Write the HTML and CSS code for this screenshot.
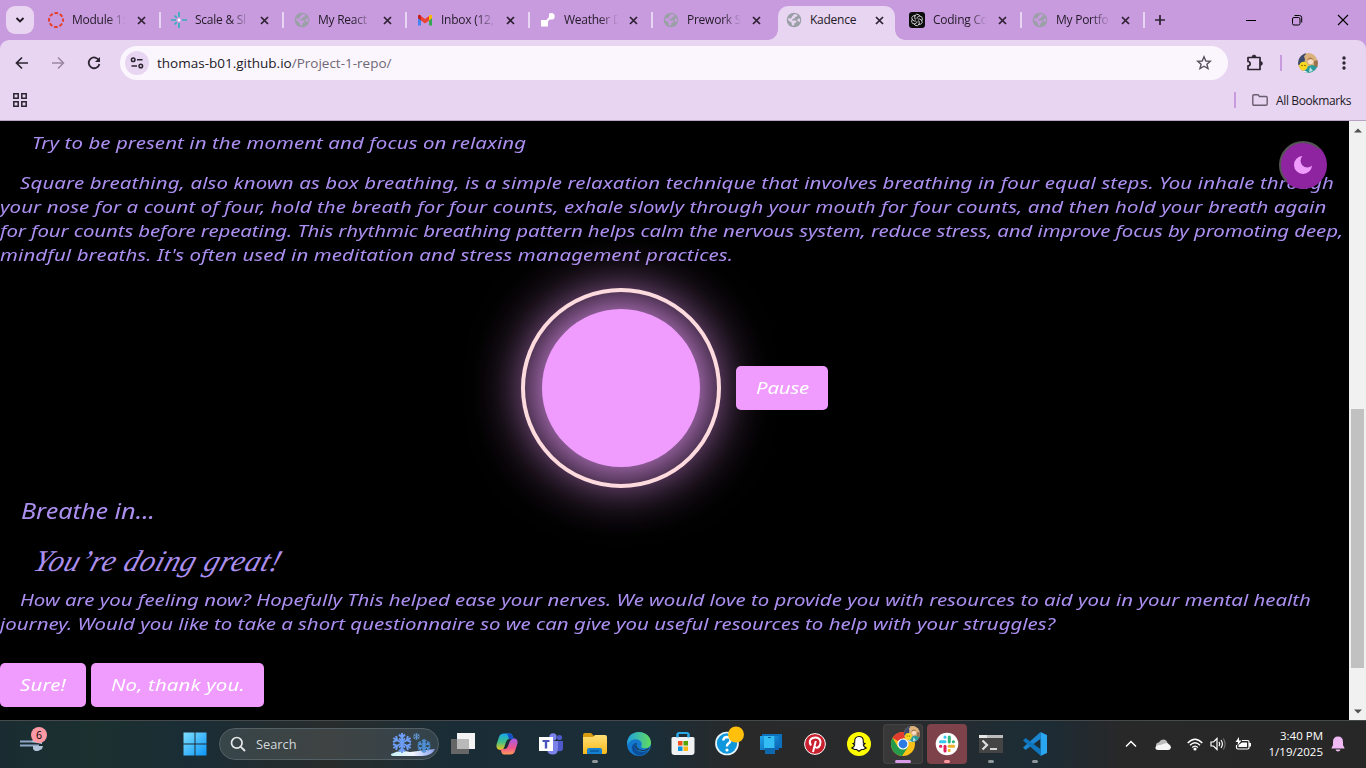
FILE: index.html
```html
<!DOCTYPE html>
<html lang="en">
<head>
<meta charset="utf-8">
<title>Kadence</title>
<link rel="stylesheet" href="styles.css">
</head>
<body>
<svg width="0" height="0" class="defs">
  <defs>
    <symbol id="globe" viewBox="0 0 16 16"><circle cx="8" cy="8" r="7.300" fill="#9aa0a6"/><path d="M8.500 2L11.500 2.800 11 4.500 9 5 8.500 6.500 6.500 7 6 8.500 10 8.500 10.500 10.500 8.500 11 8 13.500 6 13.200 5.500 10.500 2 8 2.200 6.300 5 6.500 6.500 4z" fill="currentColor"/><path d="M14 6.500L11.500 7 11.500 9 14 10z" fill="currentColor"/></symbol>
    <symbol id="x" viewBox="0 0 9 9"><path d="M1 1l7 7M8 1l-7 7" stroke="#2c2031" stroke-width="1.700" fill="none"/></symbol>
    <linearGradient id="win" x1="0" y1="0" x2="1" y2="1"><stop offset="0" stop-color="#7fe0ff"/><stop offset="1" stop-color="#0b95f7"/></linearGradient>
    <linearGradient id="cpA" x1="0" y1="0" x2="0" y2="1"><stop offset="0" stop-color="#16a6f0"/><stop offset=".5" stop-color="#3fbf8a"/><stop offset="1" stop-color="#f2c518"/></linearGradient>
    <linearGradient id="cpB" x1="0" y1="0" x2="0" y2="1"><stop offset="0" stop-color="#a65be8"/><stop offset=".6" stop-color="#f0568c"/><stop offset="1" stop-color="#ff9a5a"/></linearGradient>
    <linearGradient id="fold" x1="0" y1="0" x2="0" y2="1"><stop offset="0" stop-color="#ffdf76"/><stop offset="1" stop-color="#f8b91b"/></linearGradient>
    <linearGradient id="edA" x1="0" y1="0" x2="1" y2="0"><stop offset="0" stop-color="#1fa2e0"/><stop offset="1" stop-color="#62dc5c"/></linearGradient>
    <linearGradient id="ph" x1="0" y1="0" x2="1" y2="1"><stop offset="0" stop-color="#1fa5ea"/><stop offset="1" stop-color="#0a5fb0"/></linearGradient>
    <linearGradient id="snow" x1="0" y1="0" x2="1" y2="0"><stop offset="0" stop-color="#c4f1f6"/><stop offset=".5" stop-color="#f3f6ff"/><stop offset="1" stop-color="#8aa0ee"/></linearGradient>
    <symbol id="avatar" viewBox="0 0 20 20"><clipPath id="av"><circle cx="10" cy="10" r="10"/></clipPath><g clip-path="url(#av)"><rect width="20" height="20" fill="#d9b58a"/><path d="M0 0h8L6 12H0z" fill="#3c4a70"/><path d="M6 3Q12-3 17 3L19 14 14 16 8 10z" fill="#dcb27c"/><circle cx="12.500" cy="8.500" r="2.600" fill="#f7dcc6"/><path d="M9 7q3-5 7 0l-3-1z" fill="#a87845"/><path d="M8 14L14 12 20 13V20H6z" fill="#2a9a9c"/><path d="M16 8l4-1v7l-4-1z" fill="#9b744f"/><path d="M12 14l3 4-4 1z" fill="#bfe8e8"/><circle cx="5.500" cy="13" r="4.200" fill="#f8d91e"/><circle cx="4" cy="12.500" r=".7" fill="#5b4300"/><circle cx="7" cy="12.500" r=".7" fill="#5b4300"/><path d="M3 18h5l2 2H2z" fill="#eef"/></g></symbol>
    <symbol id="flake" viewBox="0 0 20 20"><g fill="none" stroke="currentColor" stroke-width="2"><path d="M10 0V20M1.300 5L18.700 15M18.700 5L1.300 15"/><path d="M7 1.500L10 4.500 13 1.500M7 18.500L10 15.500 13 18.500M1 9L5 7.200 4.200 3M19 11L15 12.800 15.800 17M19 9L15 7.200 15.800 3M1 11L5 12.800 4.200 17M7 5.500L10 8 13 5.500M7 14.500L10 12 13 14.500"/></g></symbol>
  </defs>
</svg>
<div class="browser">
  <div class="tabstrip">
    <div class="tabmenu"><svg width="10" height="8" viewBox="0 0 10 8"><path d="M1.500 2l3.500 3.500L8.500 2" fill="none" stroke="#221a26" stroke-width="1.900"/></svg></div>
    <div class="tab sep"><svg class="fav" viewBox="0 0 16 16"><circle cx="8" cy="8" r="7" fill="none" stroke="#e5402f" stroke-width="2" stroke-dasharray="3.700 1.800" stroke-dashoffset="1.800"/></svg><span class="title">Module 1:</span><svg class="close"><use href="#x"/></svg></div>
    <div class="tab sep"><svg class="fav" viewBox="0 0 16 16"><g stroke="#32b0bd" stroke-width="1.700"><path d="M8 0V5M8 11V16M0 8H5M11 8H16M3.500 3.500L5.800 5.800M3.500 12.500L5.800 10.200"/></g><circle cx="8" cy="8" r="1.500" fill="#fff"/></svg><span class="title">Scale &amp; Sl</span><svg class="close"><use href="#x"/></svg></div>
    <div class="tab sep"><svg class="fav"><use href="#globe"/></svg><span class="title">My React</span><svg class="close"><use href="#x"/></svg></div>
    <div class="tab sep"><svg class="fav" viewBox="0 0 16 16"><path d="M1 4V13.500H4V7z" fill="#4285f4"/><path d="M15 4V13.500H12V7z" fill="#34a853"/><path d="M12 4.500V8.500L15 6.200V3.500Q14 1.800 12 3.500z" fill="#fbbc04"/><path d="M4 4L8 7 12 4V8.500L8 11.500 4 8.500z" fill="#ea4335"/><path d="M1 3.500Q2 1.800 4 3.500V8.500L1 6.200z" fill="#c5221f"/></svg><span class="title">Inbox (12,</span><svg class="close"><use href="#x"/></svg></div>
    <div class="tab sep"><svg class="fav" viewBox="0 0 16 16"><path d="M1 8H6.500L9 5V1.500Q11 .5 13 1.200L14.600 3V6L13 7.500H9.500L8 9.500V14.500H1z" fill="#fff"/></svg><span class="title">Weather D</span><svg class="close"><use href="#x"/></svg></div>
    <div class="tab"><svg class="fav"><use href="#globe"/></svg><span class="title">Prework S</span><svg class="close"><use href="#x"/></svg></div>
    <div class="tab active"><svg class="fav"><use href="#globe"/></svg><span class="title">Kadence</span><svg class="close"><use href="#x"/></svg></div>
    <div class="tab sep"><svg class="fav" viewBox="0 0 16 16"><rect width="16" height="16" rx="3" fill="#0d0d0d"/><g fill="none" stroke="#eee" stroke-width=".75"><path id="pet" d="M8 8V5.500L10.500 4Q13.500 4 13.500 7L12.500 9"/><use href="#pet" transform="rotate(60 8 8)"/><use href="#pet" transform="rotate(120 8 8)"/><use href="#pet" transform="rotate(180 8 8)"/><use href="#pet" transform="rotate(240 8 8)"/><use href="#pet" transform="rotate(300 8 8)"/></g><circle cx="8" cy="8" r="1.300" fill="#0d0d0d"/></svg><span class="title">Coding Co</span><svg class="close"><use href="#x"/></svg></div>
    <div class="tab sep"><svg class="fav"><use href="#globe"/></svg><span class="title">My Portfo</span><svg class="close"><use href="#x"/></svg></div>
    <svg class="plus" width="12" height="12" viewBox="0 0 12 12"><path d="M6 1V11M1 6H11" stroke="#2c2031" stroke-width="1.700"/></svg>
    <div class="winctl">
      <svg width="12" height="12" viewBox="0 0 12 12"><path d="M1 6.500H11" stroke="#000"/></svg>
      <svg width="12" height="12" viewBox="0 0 12 12"><rect x="1.500" y="3.500" width="7.500" height="7.500" rx="1.500" fill="none" stroke="#000"/><path d="M3.500 1.500H8.500Q10.700 1.500 10.700 3.700V8.500" fill="none" stroke="#000"/></svg>
      <svg width="12" height="12" viewBox="0 0 12 12"><path d="M1 1L11 11M11 1L1 11" stroke="#000" stroke-width="1.100"/></svg>
    </div>
  </div>
  <div class="chrome-body">
  <div class="toolbar">
    <div class="nav">
      <svg width="16" height="16" viewBox="0 0 16 16"><path d="M14 8H3M8 2.500L2.500 8 8 13.500" fill="none" stroke="#2c2431" stroke-width="1.700"/></svg>
      <svg width="16" height="16" viewBox="0 0 16 16"><path d="M2 8H13M8 2.500L13.500 8 8 13.500" fill="none" stroke="#9a86a5" stroke-width="1.500"/></svg>
      <svg width="16" height="16" viewBox="0 0 16 16"><path d="M13 5.500A5.400 5.400 0 1 0 13.400 9" fill="none" stroke="#2c2431" stroke-width="1.800"/><path d="M14 2V7H9z" fill="#2c2431"/></svg>
    </div>
    <div class="omnibox">
      <span class="site"><svg width="14" height="14" viewBox="0 0 14 14"><g fill="none" stroke="#2c2431" stroke-width="1.500"><circle cx="3.200" cy="3.700" r="1.800"/><path d="M7 3.700H12.500M1.500 10H7"/><circle cx="10.800" cy="10" r="1.800"/></g></svg></span>
      <span class="url">thomas-b01.github.io<span class="path">/Project-1-repo/</span></span>
      <svg class="star" width="16" height="16" viewBox="0 0 16 16"><path d="M8 1.800L9.800 6 14.300 6.300 10.900 9.200 12 13.600 8 11.200 4 13.600 5.100 9.200 1.700 6.300 6.200 6z" fill="none" stroke="#59515e" stroke-width="1.400"/></svg>
    </div>
    <svg class="ext" width="18" height="18" viewBox="0 0 18 18"><path d="M2 3.500H14V15.500H2V11.800A2 2 0 0 0 2 7.500V3.500z" fill="none" stroke="#2c2431" stroke-width="1.700" stroke-linejoin="round"/><path d="M6 3A2 2 0 0 1 10 3zM14.500 7.400A2 2 0 0 1 14.500 11.400z" fill="#2c2431" stroke="#2c2431" stroke-width=".6"/></svg>
    <i class="vline"></i>
    <svg class="ava" width="20" height="20"><use href="#avatar"/></svg>
    <svg width="4" height="14" viewBox="0 0 4 14"><g fill="#2c2431"><circle cx="2" cy="2" r="1.700"/><circle cx="2" cy="7" r="1.700"/><circle cx="2" cy="12" r="1.700"/></g></svg>
  </div>
  <div class="bookmarks">
    <svg width="14" height="14" viewBox="0 0 14 14"><g fill="none" stroke="#2c2431" stroke-width="1.500"><path d="M.8.800H5.200V5.200H.8zM8.800.800H13.200V5.200H8.800zM.8 8.800H5.200V13.200H.8zM8.800 8.800H13.200V13.200H8.800z"/></g></svg>
    <i class="vline end"></i>
    <svg class="folder" width="16" height="12" viewBox="0 0 16 12"><path d="M.8 10V2Q.8.800 2 .800H6L7.500 2.500H14Q15.200 2.500 15.200 3.700V10Q15.200 11.200 14 11.200H2Q.8 11.200.8 10z" fill="none" stroke="#6a5f70" stroke-width="1.400"/></svg>
    <span class="allb">All Bookmarks</span>
  </div>
  </div>
  <div class="viewport">
    <main class="page">
      <p class="line intro"><span class="wide t2">Try to be present in the moment and focus on relaxing</span></p>
      <div class="about">
        <p class="line first"><span class="wide t3">Square breathing, also known as box breathing, is a simple relaxation technique that involves breathing in four equal steps. You inhale through</span></p>
        <p class="line"><span class="wide t2">your nose for a count of four, hold the breath for four counts, exhale slowly through your mouth for four counts, and then hold your breath again</span></p>
        <p class="line"><span class="wide t0">for four counts before repeating. This rhythmic breathing pattern helps calm the nervous system, reduce stress, and improve focus by promoting deep,</span></p>
        <p class="line"><span class="wide t3">mindful breaths. It's often used in meditation and stress management practices.</span></p>
      </div>
      <div class="exercise">
        <div class="ring"><div class="orb"></div></div>
        <button class="btn pause"><span class="wide">Pause</span></button>
      </div>
      <p class="breathe"><span class="wide">Breathe in...</span></p>
      <h2 class="praise"><span>You’re doing great!</span></h2>
      <div class="feeling">
        <p class="line first"><span class="wide t1">How are you feeling now? Hopefully This helped ease your nerves. We would love to provide you with resources to aid you in your mental health</span></p>
        <p class="line"><span class="wide t1">journey. Would you like to take a short questionnaire so we can give you useful resources to help with your struggles?</span></p>
      </div>
      <div class="choices">
        <button class="btn sure"><span class="wide t3">Sure!</span></button>
        <button class="btn decline"><span class="wide t3">No, thank you.</span></button>
      </div>
      <button class="theme"><svg width="20" height="20" viewBox="0 0 20 20"><path d="M9.500 1A9 9 0 1 0 19 10.500A5.800 5.800 0 1 1 9.500 1z" fill="#f09cff"/></svg></button>
    </main>
    <div class="scroll">
      <svg width="8" height="5" viewBox="0 0 8 5"><path d="M0 4.500L4 .5 8 4.500z" fill="#505050"/></svg>
      <div class="thumb"></div>
      <svg class="down" width="8" height="5" viewBox="0 0 8 5"><path d="M0 .5L4 4.500 8 .5z" fill="#505050"/></svg>
    </div>
  </div>
</div>
<div class="taskbar">
  <div class="weather"><svg width="26" height="20" viewBox="0 0 26 20"><path d="M1 7.500H18M1 11.500H20" stroke="#8fa8c8" stroke-width="2"/><path d="M13 7L17 3 23 4V10L13 8zM14 12H24L23 15 19 17H16L14 15z" fill="#b2c4da"/></svg><b class="badge">6</b></div>
  <svg class="start" width="24" height="24" viewBox="0 0 24 24"><path d="M.5.500H11.500V11.500H.5zM12.500.500H23.500V11.500H12.500zM.5 12.500H11.500V23.500H.5zM12.500 12.500H23.500V23.500H12.500z" fill="url(#win)"/></svg>
  <div class="search">
    <svg width="16" height="16" viewBox="0 0 16 16"><circle cx="6.800" cy="6.800" r="5.300" fill="none" stroke="#e6e8e9" stroke-width="1.700"/><path d="M10.800 10.800L15 15" stroke="#e6e8e9" stroke-width="1.900"/></svg>
    <span>Search</span>
    <svg class="winter" width="46" height="26" viewBox="0 0 46 26"><path d="M1 23Q10 18 20 21L45 18Q42 25 32 25H5Q0 25 1 23z" fill="url(#snow)"/><use href="#flake" x="2" y="2" width="20" height="20" color="#6d9df5"/><use href="#flake" x="27" y="8" width="14" height="14" color="#4f91d8"/><use href="#flake" x="23" y="2" width="7" height="7" color="#6aa0e0"/></svg>
  </div>
  <div class="apps">
    <div class="app"><svg viewBox="0 0 24 24"><rect x="6" y="1" width="18" height="16" fill="#f3f3f3"/><rect x="0" y="7" width="18" height="15" fill="#666"/><rect x="6" y="7" width="12" height="10" fill="#b9b9b9"/></svg></div>
    <div class="app"><svg viewBox="0 0 24 24"><path d="M9 1.500H15Q17 1.500 18 5L19 7H14Q12 7 11 10L9 16Q8 18 5 18Q0 17 2 11L4 5Q5 1.500 9 1.500z" fill="url(#cpA)"/><path d="M12 1.500H15Q17 1.500 18 5L18.500 7H14Q13 4 12 1.500z" fill="#174fc4"/><path d="M15 22.500H9Q7 22.500 6 19L5.500 17H10Q12 17 13 14L15 9Q16 6.500 19 6.500Q24 7 22 13L20 19Q19 22.500 15 22.500z" fill="url(#cpB)"/></svg></div>
    <div class="app"><svg viewBox="0 0 24 24"><circle cx="14" cy="5" r="3.700" fill="#7b83eb"/><circle cx="20.500" cy="5.500" r="2.600" fill="#5059c9"/><path d="M8 9H19V17Q19 22.500 13.500 22.500Q9 22.500 8 18z" fill="#7b83eb"/><path d="M19 9H24V16Q24 20 19 19z" fill="#5059c9"/><rect x="0" y="5" width="14" height="14" fill="#fff"/><path d="M3.500 8H10.500V10H8.200V16.500H5.800V10H3.500z" fill="#4b53bc"/></svg></div>
    <div class="app run"><svg viewBox="0 0 24 24"><path d="M0 3Q0 1 2 1H8L11 4V6H0z" fill="#d99a0f"/><path d="M0 5H10L12 3H22Q24 3 24 5V20Q24 22 22 22H0z" fill="url(#fold)"/><path d="M4 22V18Q4 16 6 16H17Q19 16 19 18V22z" fill="#1580cf"/><path d="M7 19H16" stroke="#0b5a9e" stroke-width="1.500"/></svg></div>
    <div class="app"><svg viewBox="0 0 24 24"><circle cx="12" cy="12" r="12" fill="#1478cc"/><path d="M.3 10C1 3.500 6 0 12 0C19 0 24 5 24 11C24 15 20 17 16 16Q13.500 15.500 14.500 13.500C16 9 10 6 5 8Q1.500 9.500 .3 13z" fill="url(#edA)"/><path d="M9.500 11C7 14 9 20 15 20Q19 20 21.500 18C18 24 11 25 7 21C3 17 5 11 9.500 11z" fill="#0b4f9c"/><path d="M10 10.500Q8.500 13 10 15.500 13 19 18 17.800L22.500 15.500 22 17Q18 19.500 14 18.800C9 18 7 14 10 10.500z" fill="#20343b"/></svg></div>
    <div class="app"><svg viewBox="0 0 24 24"><path d="M6.500 7V2.500Q6.500 1 8 1H16Q17.500 1 17.500 2.500V7" fill="none" stroke="#2aa9e8" stroke-width="2"/><path d="M.5 6.500Q.5 5 2 5H22Q23.500 5 23.500 6.500V20Q23.500 23 20.500 23H3.500Q.5 23 .5 20z" fill="#f0f1f2"/><path d="M6.500 1.500V5.500M17.500 1.500V5.500" stroke="#2aa9e8" stroke-width="2"/><path d="M7 9H11.500V13.500H7z" fill="#f1511b"/><path d="M12.500 9H17V13.500H12.500z" fill="#57a300"/><path d="M7 14.500H11.500V19H7z" fill="#0a93e0"/><path d="M12.500 14.500H17V19H12.500z" fill="#fdb913"/></svg></div>
    <div class="app"><svg class="help" viewBox="0 0 30 30"><circle cx="12" cy="17.500" r="11" fill="#0e97dc" stroke="#e9f5fb" stroke-width="1.700"/><path d="M8.300 14.500Q8.500 11 12 11 15.700 11.200 15.500 14.500 15.300 16.500 13 17.800 12 18.500 12 20.500" fill="none" stroke="#fff" stroke-width="2.500"/><circle cx="12" cy="24" r="1.600" fill="#fff"/><circle cx="21" cy="8.500" r="8" fill="#ffbf0a"/></svg></div>
    <div class="app"><svg viewBox="0 0 24 24"><path d="M3 2H23V16H3z" fill="#0c72bd"/><path d="M1 4H20V18H1z" fill="url(#ph)"/><path d="M6 4H16V22H6z" fill="#0e68ad"/><path d="M5 4H15.500V16H5z" fill="#34bdf4"/><path d="M9 5.500H12" stroke="#0b5890"/></svg></div>
    <div class="app"><svg viewBox="0 0 24 24"><circle cx="12" cy="12" r="10.400" fill="#c8202f" stroke="#fff" stroke-width="1"/><path d="M8 13.500C5 9 8 5.500 12.500 5.500S18.500 9.500 17 13 12.500 16.500 11.500 14M12.800 9L10 20" fill="none" stroke="#fff" stroke-width="2"/></svg></div>
    <div class="app"><svg viewBox="0 0 24 24"><circle cx="12" cy="12" r="12" fill="#fffc00"/><path d="M12 4.500C15 4.500 16.300 6.500 16.300 9V11L18 11.500 16.300 13Q17 15 19.200 16L16.500 17.500 14.500 17.500 12 19.300 9.500 17.500 7.500 17.500 4.800 16Q7 15 7.700 13L6 11.500 7.700 11V9C7.700 6.500 9 4.500 12 4.500z" fill="#fff" stroke="#111" stroke-width="1.100"/></svg></div>
    <div class="app run current"><svg viewBox="0 0 24 24"><circle cx="12" cy="12" r="12" fill="#fbc116"/><path d="M12 12L1.600 6A12 12 0 0 1 22.400 6H12z" fill="#e33b2e"/><path d="M1.600 6A12 12 0 0 0 11 24L17 15 7 15z" fill="#239b4b"/><circle cx="12" cy="12" r="5.600" fill="#fff"/><circle cx="12" cy="12" r="4.400" fill="#2c7be5"/></svg><svg class="mini"><use href="#avatar"/></svg></div>
    <div class="app run alert"><svg viewBox="0 0 24 24"><circle cx="12" cy="12" r="11.300" fill="#fff"/><g stroke-width="3" stroke-linecap="round"><path d="M10 5V5.200M5.500 9.800H10" stroke="#36c5f0"/><path d="M14.300 5V10M18.500 9.800H18.300" stroke="#2eb67d"/><path d="M14 14.300H18.700M14.200 18.500V18.300" stroke="#ecb22e"/><path d="M10 14.300V19M5.500 14.300H5.800" stroke="#e01e5a"/></g></svg></div>
    <div class="app run"><svg viewBox="0 0 24 24"><rect y="3" width="24" height="18" fill="#444"/><rect y="3" width="24" height="3" fill="#bcbcbc"/><rect y="3" width="8" height="3" fill="#e6e6e6"/><path d="M3.500 8.500L8 13 3.500 17.500" fill="none" stroke="#ddd" stroke-width="2.300"/><path d="M11 17H18" stroke="#eee" stroke-width="1.700"/></svg></div>
    <div class="app run"><svg viewBox="0 0 24 24"><path d="M17.500 0L24 3V21L17.500 24z" fill="#2aa5ef"/><path d="M17.500 0L0 15.500 2.500 18 18 6.500z" fill="#1b86cf"/><path d="M0 8.500L2.500 6 18 17.500V24z" fill="#0f76bd"/></svg></div>
  </div>
  <div class="tray">
    <svg width="12" height="8" viewBox="0 0 12 8"><path d="M1 6.500L6 1.500 11 6.500" fill="none" stroke="#fff" stroke-width="1.500"/></svg>
    <svg class="cloud" width="16" height="11" viewBox="0 0 16 11"><path d="M1.500 8Q0 4 4 3.200 6-.5 10 .8 12 1.500 12.500 4L15 6z" fill="#bcbcbc"/><path d="M3 11Q0 11 .5 8 1.500 5.500 5 6L11.500 4Q13 4 13.500 5.500 16 6 16 8.500 15.500 11 13 11z" fill="#f5f5f5"/></svg>
    <svg class="wifi" width="16" height="13" viewBox="0 0 16 13"><g fill="none" stroke="#fff" stroke-width="1.300"><path d="M.7 5Q8-2.500 15.300 5M3 7.300Q8 2.300 13 7.300M5.200 9.500Q8 6.800 10.800 9.500"/></g><circle cx="8" cy="11" r="1.600" fill="#fff"/></svg>
    <svg class="vol" width="17" height="14" viewBox="0 0 17 14"><path d="M1 5H3.500L7 1.500V12.500L3.500 9H1z" fill="none" stroke="#fff" stroke-width="1.200"/><path d="M9 4.800Q10.500 7 9 9.200M11 3Q13.800 7 11 11" fill="none" stroke="#fff" stroke-width="1.200"/><path d="M13.300 1.500Q17 7 13.300 12.500" fill="none" stroke="#777" stroke-width="1.100"/></svg>
    <svg class="bat" width="17" height="14" viewBox="0 0 17 14"><path d="M7 3.500H12.500Q14 3.500 14 5V10.500Q14 12 12.500 12H3Q1.500 12 1.500 10.500V8" fill="none" stroke="#fff" stroke-width="1.200"/><path d="M7 5.500H12V10H3.500V8z" fill="#fff"/><path d="M15 6V9.500" stroke="#fff" stroke-width="2"/><path d="M4 0L.5 5H3L2.500 8.500 6.500 3.500H4z" fill="#fff"/></svg>
    <div class="clock">3:40 PM<br>1/19/2025</div>
    <svg class="bell" width="14" height="16" viewBox="0 0 14 16"><path d="M7 .5Q12 .5 12 6V9L13.700 12.500H.3L2 9V6Q2 .5 7 .5zM4.500 13.500H9.500Q9 15.500 7 15.500T4.500 13.500z" fill="#efb9f3"/></svg>
  </div>
</div>
</body>
</html>
```
FILE: styles.css
```css
* { box-sizing: border-box; }
body { margin: 0; width: 1366px; height: 768px; overflow: hidden; background: #000; font-family: "Open Sans", "Noto Sans", sans-serif; font-size: 12px; color: #221a26; display: flex; flex-direction: column; }
svg { display: block; flex: none; }
.defs { position: absolute; }
p, h2 { margin: 0; }
.browser { height: 720px; background: #c89bdf; display: flex; flex-direction: column; }
.tabstrip { height: 40px; display: flex; align-items: center; gap: 6px; padding-left: 6px; }
.tabmenu { width: 28px; height: 28px; border-radius: 9px; background: #e8d5f1; display: flex; align-items: center; justify-content: center; }
.tab { position: relative; width: 117px; height: 34px; margin-top: 6px; padding: 0 10px 6px 8px; display: flex; align-items: center; }
.tab.sep::after { content: ""; position: absolute; right: -4px; top: 6px; width: 2px; height: 16px; background: #e8d5f1; }
.tab.active { background: #e8d5f1; border-radius: 10px 10px 0 0; }
.tab.active::before, .tab.active::after { content: ""; position: absolute; bottom: 0; width: 10px; height: 10px; }
.tab.active::before { left: -10px; background: radial-gradient(circle at 0 0, transparent 9.5px, #e8d5f1 10px); }
.tab.active::after { right: -10px; background: radial-gradient(circle at 100% 0, transparent 9.5px, #e8d5f1 10px); }
.fav { width: 16px; height: 16px; color: #c89bdf; }
.active .fav { color: #e8d5f1; }
.title { width: 54px; margin-left: 8px; white-space: nowrap; line-height: 16px; letter-spacing: -.25px; -webkit-mask-image: linear-gradient(90deg, #000 66%, transparent); mask-image: linear-gradient(90deg, #000 66%, transparent); }
.active .title { -webkit-mask-image: none; mask-image: none; }
.close { width: 9px; height: 9px; margin-left: auto; margin-right: 1px; }
.plus { margin-left: 7px; }
.winctl { margin-left: auto; display: flex; gap: 34px; padding-right: 17px; }
.chrome-body { height: 81px; background: #e8d5f1; border-radius: 9px 9px 0 0; border-bottom: 1px solid #b8a4c2; }
.toolbar { height: 46px; display: flex; align-items: center; padding-left: 14px; }
.nav { display: flex; gap: 20px; width: 106px; }
.omnibox { width: 1108px; height: 34px; border-radius: 17px; background: #fbf6fd; display: flex; align-items: center; padding: 0 16px 0 5px; }
.site { width: 24px; height: 24px; border-radius: 50%; background: #e8d5f1; display: flex; align-items: center; justify-content: center; margin-right: 8px; }
.url { font-size: 13.5px; white-space: nowrap; }
.path { color: #706776; }
.star { margin-left: auto; }
.ext { margin-left: 18px; }
.vline { width: 2px; height: 16px; background: #c89bdf; margin: 0 16px; }
.ava { margin-right: 24px; }
.bookmarks { height: 28px; display: flex; align-items: center; padding: 0 15px 0 13px; }
.vline.end { margin-left: auto; }
.folder { margin-right: 8px; }
.allb { width: 75px; white-space: nowrap; letter-spacing: -.37px; }
.viewport { height: 599px; display: flex; background: #000; }
.page { position: relative; width: 1349px; height: 599px; padding-top: 10px; overflow: hidden; color: #ab8ff0; font-family: "Noto Sans", "Open Sans", sans-serif; font-style: italic; font-size: 17px; line-height: 24px; }
/* Extended letterforms */
.wide { display: inline-block; transform: scaleX(1.2); transform-origin: 0 50%; white-space: nowrap; }
.t0 { letter-spacing: -.08px; }
.t1 { letter-spacing: 0; }
.t2 { letter-spacing: .08px; }
.t3 { letter-spacing: .112px; }
.line { height: 24px; white-space: nowrap; }
.intro { padding-left: 32px; }
.about { margin-top: 16px; }
.first { padding-left: 20px; }
.exercise { display: flex; align-items: center; justify-content: center; gap: 15px; margin-top: 21px; isolation: isolate; }
.ring { width: 200px; height: 200px; border: 4px solid #fcdadd; border-radius: 50%; display: flex; align-items: center; justify-content: center; }
.orb { position: relative; z-index: -1; width: 158px; height: 158px; border-radius: 50%; background: #f09cff; box-shadow: 0 0 60px 10px #f09cff; }
.btn { height: 44px; padding: 0 0 0 20px; border: 0; border-radius: 5px; background: #f09cff; color: #fff; font: italic 17px/24px "Noto Sans", sans-serif; text-align: left; white-space: nowrap; }
.pause { width: 92px; }
.pause .wide { letter-spacing: -.15px; }
.sure { width: 86px; }
.decline { width: 173px; }
.breathe { margin-top: 11px; padding-left: 21px; font-size: 21px; }
.praise { height: 51px; margin-top: 14px; padding-left: 35px; font: italic 400 30px/48px "Liberation Serif", serif; letter-spacing: .7px; white-space: nowrap; }
.praise span { display: inline-block; transform: skewX(-18deg); }
.choices { display: flex; gap: 5px; margin-top: 27px; }
.theme { position: absolute; left: 1279px; top: 20px; width: 48px; height: 48px; padding: 0; border: 2px solid #8e24a0; border-top-color: #555; border-left-color: #555; border-radius: 50%; background: #8e24a0; display: flex; align-items: center; justify-content: center; }
.scroll { width: 17px; background: #f1f1f1; display: flex; flex-direction: column; align-items: center; padding-top: 7px; }
.thumb { width: 13px; height: 259px; margin-top: 276px; background: #c1c1c1; }
.scroll .down { margin-top: 41px; }
.taskbar { height: 48px; box-shadow: inset 0 1px #454a4c; background: linear-gradient(90deg, #1a2c31 0, #1b302f 7%, #1a2d36 14%, #282c2b 24%, #1a2d36 33%, #1b2d36 48%, #29292a 54%, #292a2b 66%, #1e2c34 74%, #1d2b34 77%, #282828 82%, #272727 100%); display: flex; align-items: center; color: #fff; }
.weather { position: relative; width: 183px; padding-left: 19px; }
.badge { position: absolute; left: 31px; top: -7px; width: 16px; height: 16px; border-radius: 50%; background: #ff99a4; color: #000; font: 10.5px/16px "Open Sans", sans-serif; text-align: center; }
.search { width: 220px; height: 32px; margin-left: 12px; border: 1px solid #536066; border-radius: 16px; background: linear-gradient(90deg, #374549, #3f4343 50%, #33434b); display: flex; align-items: center; padding: 0 2px 0 10px; font-size: 12.8px; color: #d4d9db; }
.search span { margin-left: 10px; }
.winter { margin-left: auto; }
.apps { display: flex; gap: 4px; margin-left: 4px; }
.app { position: relative; width: 40px; height: 40px; border-radius: 4px; display: flex; align-items: center; justify-content: center; }
.app svg { width: 24px; height: 24px; }
.app .help { width: 30px; height: 30px; margin: -6px 0 0 6px; }
.app .mini { position: absolute; width: 16px; height: 16px; right: 3px; top: 2px; }
.run::after { content: ""; position: absolute; bottom: 1px; width: 6px; height: 3px; border-radius: 2px; background: #8f979b; }
.current { background: #383839; box-shadow: inset 0 0 0 1px #434344; }
.current::after { width: 16px; background: #d99be8; }
.alert { background: #7e434a; }
.alert::after { background: #ff99a4; }
.tray { display: flex; align-items: center; width: 290px; margin-left: auto; padding-left: 49px; }
.cloud { margin-left: 18px; }
.wifi { margin-left: 16px; }
.vol { margin-left: 7px; }
.bat { margin-left: 8px; }
.clock { width: 71px; text-align: right; font-size: 11.5px; line-height: 16px; white-space: nowrap; }
.bell { margin-left: 8px; }
```
